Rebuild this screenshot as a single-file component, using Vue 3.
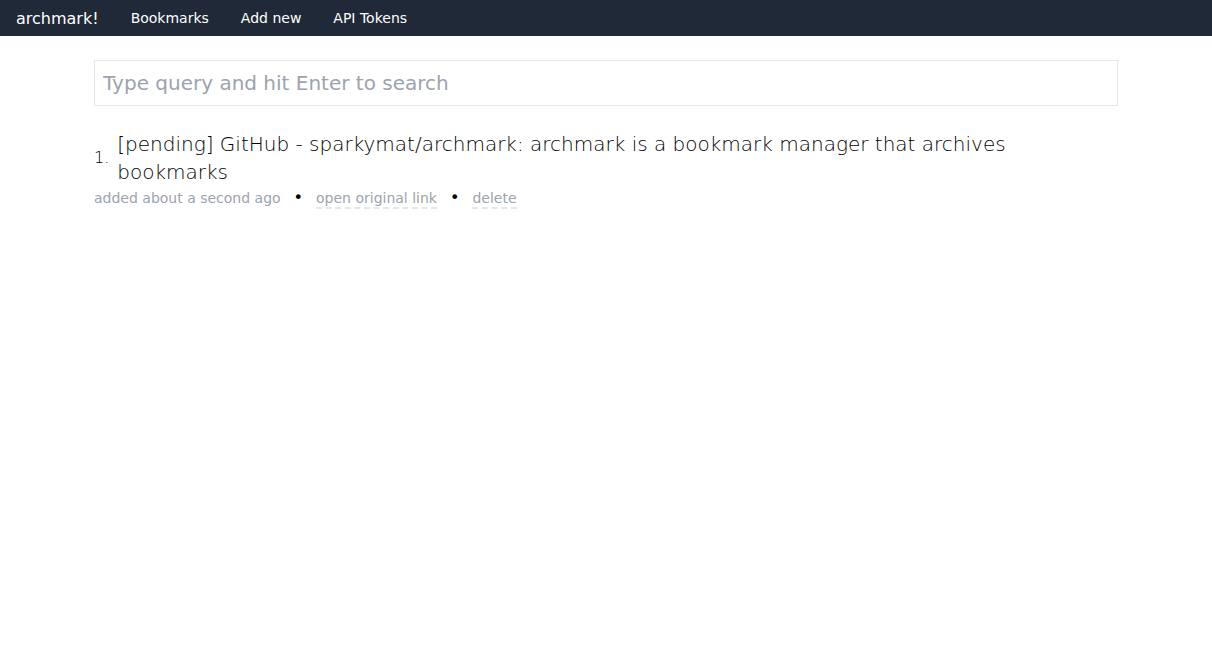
<script setup>
const links = ['Bookmarks', 'Add new', 'API Tokens']
const bookmarks = [
  {
    id: 1,
    title: '[pending] GitHub - sparkymat/archmark: archmark is a bookmark manager that archives bookmarks',
    added: 'added about a second ago',
  },
]
</script>

<template>
  <nav class="nav">
    <a class="brand" href="#">archmark!</a>
    <a v-for="link in links" :key="link" class="nav-link" href="#">{{ link }}</a>
  </nav>
  <main class="container">
    <form class="search" @submit.prevent>
      <input class="query" type="text" aria-label="Search bookmarks" placeholder="Type query and hit Enter to search" />
    </form>
    <article v-for="(item, index) in bookmarks" :key="item.id" class="bookmark">
      <div class="heading">
        <span class="index">{{ index + 1 }}.</span>
        <a class="title" href="#">{{ item.title }}</a>
      </div>
      <div class="meta">
        <span>{{ item.added }}</span>
        <span class="dot">•</span>
        <span><a class="action" href="#">open original link</a></span>
        <span class="dot">•</span>
        <span><a class="action" href="#">delete</a></span>
      </div>
    </article>
  </main>
</template>

<style>
body {
  margin: 0;
  background: #fff;
}
</style>

<style scoped>
.nav,
.container {
  font-family: "DejaVu Sans", sans-serif;
  line-height: 24px;
  -webkit-font-smoothing: antialiased;
}
.nav {
  display: flex;
  align-items: center;
  gap: 32px;
  box-sizing: border-box;
  min-height: 36px;
  padding: 4px 16px;
  background: #1f2937;
}
.nav a {
  color: #fff;
  text-decoration: none;
}
.brand {
  font-size: 16px;
  line-height: 25px;
}
.nav-link {
  font-size: 14px;
}
.container {
  box-sizing: border-box;
  max-width: 1024px;
  margin: 0 auto;
  padding-top: 24px;
}
.query {
  display: block;
  box-sizing: border-box;
  width: 100%;
  padding: 8px;
  border: 1px solid #e5e7eb;
  background: #fff;
  font-family: inherit;
  font-size: 20px;
  line-height: 28px;
  color: #000;
  outline: none;
}
.query::placeholder {
  color: #9ca3af;
  opacity: 1;
}
.bookmark {
  margin-top: 24px;
}
.heading {
  display: flex;
  align-items: center;
  gap: 8px;
  font-weight: 200;
  color: #000;
}
.index {
  font-size: 16px;
}
.title {
  font-size: 20px;
  line-height: 28px;
  color: #000;
  text-decoration: none;
}
.meta {
  display: flex;
  align-items: center;
  font-size: 14px;
  line-height: 24px;
  color: #9ca3af;
}
.dot {
  margin: 0 13px;
  font-size: 16px;
  color: #000;
}
.action {
  padding-bottom: 1px;
  border-bottom: 2px dashed #e5e7eb;
  color: #9ca3af;
  text-decoration: none;
}
</style>
